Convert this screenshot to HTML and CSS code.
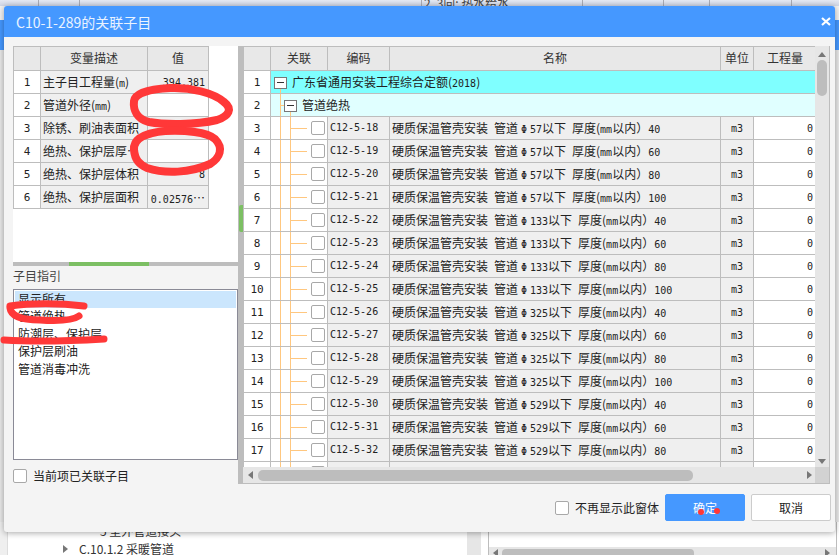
FILE: index.html
```html
<!DOCTYPE html>
<html lang="zh-CN">
<head>
    <meta charset="UTF-8">
    <title>C10-1-289的关联子目</title>
    <link rel="stylesheet" href="styles.css">
</head>
<body>
    <div class="page">
        <div class="page-top">
            <span class="top-cell w39"></span><span class="top-cell w41"></span><span class="top-cell w342"></span>
            <span class="top-cell w161">2. 3向: 热水给水</span><span class="top-cell w81"></span><span class="top-cell w46"></span><span class="top-cell w82"></span>
        </div>
        <div class="page-mid">
            <span class="side-gap"></span>
            <span class="side-blue"></span>
        </div>
        <div class="page-bottom">
            <span class="bottom-side"></span>
            <div class="page-tree">
                <div class="tree-line sub">5 室外管道接头</div>
                <div class="tree-line"><i class="arrow-right"></i>C.10.1.2 采暖管道</div>
            </div>
            <span class="bottom-col"></span>
            <div class="bottom-panel">
                <div class="page-hbar"><i class="arrow-left"></i><span class="page-thumb"></span><i class="arrow-right"></i></div>
            </div>
        </div>
    </div>

    <div class="dialog">
        <div class="dialog-title">
            <span>C10-1-289的关联子目</span>
            <svg class="close" width="10" height="9" viewBox="0 0 10 9"><path d="M1 1L9 8M9 1L1 8" stroke="#fff" stroke-width="2.2" fill="none"/></svg>
        </div>

        <div class="dialog-main">
            <div class="left-col">
                <div class="var-panel">
                    <table class="grid var-table">
                        <colgroup><col class="c-num"><col class="c-desc"><col class="c-val"></colgroup>
                        <thead><tr><th></th><th>变量描述</th><th>值</th></tr></thead>
                        <tbody>
                            <tr><td class="num">1</td><td class="gray"><div class="clip">主子目工程量(<span class="m">m</span>)</div></td><td class="val ro">394.381</td></tr>
                            <tr><td class="num">2</td><td class="gray"><div class="clip">管道外径(<span class="m">mm</span>)</div></td><td class="val"></td></tr>
                            <tr><td class="num">3</td><td class="gray"><div class="clip">除锈、刷油表面积</div></td><td class="val ro"></td></tr>
                            <tr><td class="num">4</td><td class="gray"><div class="clip">绝热、保护层厚度(mm)</div></td><td class="val"></td></tr>
                            <tr><td class="num">5</td><td class="gray"><div class="clip">绝热、保护层体积</div></td><td class="val ro">8</td></tr>
                            <tr><td class="num">6</td><td class="gray"><div class="clip">绝热、保护层面积</div></td><td class="val ro">0.02576<span class="dots">…</span></td></tr>
                        </tbody>
                    </table>
                </div>
                <div class="hsplit"><span class="hsplit-grip"></span></div>
                <div class="guide-label">子目指引</div>
                <ul class="guide-list">
                    <li class="selected">显示所有</li>
                    <li>管道绝热</li>
                    <li>防潮层、保护层</li>
                    <li>保护层刷油</li>
                    <li>管道消毒冲洗</li>
                </ul>
                <label class="check-row"><span class="box"></span>当前项已关联子目</label>
            </div>

            <div class="vsplit"><span class="vsplit-grip"></span></div>

            <div class="right-col">
                <div class="right-top">
                    <div class="rows-clip">
                        <table class="grid item-table">
                            <colgroup><col class="i-num"><col class="i-link"><col class="i-code"><col class="i-name"><col class="i-unit"><col class="i-qty"></colgroup>
                            <thead><tr><th></th><th>关联</th><th>编码</th><th>名称</th><th>单位</th><th>工程量</th></tr></thead>
                            <tbody>
                                <tr class="lv1"><td class="num">1</td><td colspan="5" class="root-cell"><span class="fold"></span>广东省通用安装工程综合定额(<span class="m">2018</span>)</td></tr>
                                <tr class="lv2"><td class="num">2</td><td colspan="5" class="group-cell"><span class="fold"></span>管道绝热</td></tr>
                                <tr><td class="num">3</td><td class="tree"><span class="box"></span></td><td class="code">C12-5-18</td><td class="gray name">硬质保温管壳安装 管道<span class="phi">Φ</span><span class="m">57</span>以下 厚度(<span class="m">mm</span>以内）<span class="m">40</span></td><td class="unit">m3</td><td class="qty">0</td></tr>
                                <tr><td class="num">4</td><td class="tree"><span class="box"></span></td><td class="code">C12-5-19</td><td class="gray name">硬质保温管壳安装 管道<span class="phi">Φ</span><span class="m">57</span>以下 厚度(<span class="m">mm</span>以内）<span class="m">60</span></td><td class="unit">m3</td><td class="qty">0</td></tr>
                                <tr><td class="num">5</td><td class="tree"><span class="box"></span></td><td class="code">C12-5-20</td><td class="gray name">硬质保温管壳安装 管道<span class="phi">Φ</span><span class="m">57</span>以下 厚度(<span class="m">mm</span>以内）<span class="m">80</span></td><td class="unit">m3</td><td class="qty">0</td></tr>
                                <tr><td class="num">6</td><td class="tree"><span class="box"></span></td><td class="code">C12-5-21</td><td class="gray name">硬质保温管壳安装 管道<span class="phi">Φ</span><span class="m">57</span>以下 厚度(<span class="m">mm</span>以内）<span class="m">100</span></td><td class="unit">m3</td><td class="qty">0</td></tr>
                                <tr><td class="num">7</td><td class="tree"><span class="box"></span></td><td class="code">C12-5-22</td><td class="gray name">硬质保温管壳安装 管道<span class="phi">Φ</span><span class="m">133</span>以下 厚度(<span class="m">mm</span>以内）<span class="m">40</span></td><td class="unit">m3</td><td class="qty">0</td></tr>
                                <tr><td class="num">8</td><td class="tree"><span class="box"></span></td><td class="code">C12-5-23</td><td class="gray name">硬质保温管壳安装 管道<span class="phi">Φ</span><span class="m">133</span>以下 厚度(<span class="m">mm</span>以内）<span class="m">60</span></td><td class="unit">m3</td><td class="qty">0</td></tr>
                                <tr><td class="num">9</td><td class="tree"><span class="box"></span></td><td class="code">C12-5-24</td><td class="gray name">硬质保温管壳安装 管道<span class="phi">Φ</span><span class="m">133</span>以下 厚度(<span class="m">mm</span>以内）<span class="m">80</span></td><td class="unit">m3</td><td class="qty">0</td></tr>
                                <tr><td class="num">10</td><td class="tree"><span class="box"></span></td><td class="code">C12-5-25</td><td class="gray name">硬质保温管壳安装 管道<span class="phi">Φ</span><span class="m">133</span>以下 厚度(<span class="m">mm</span>以内）<span class="m">100</span></td><td class="unit">m3</td><td class="qty">0</td></tr>
                                <tr><td class="num">11</td><td class="tree"><span class="box"></span></td><td class="code">C12-5-26</td><td class="gray name">硬质保温管壳安装 管道<span class="phi">Φ</span><span class="m">325</span>以下 厚度(<span class="m">mm</span>以内）<span class="m">40</span></td><td class="unit">m3</td><td class="qty">0</td></tr>
                                <tr><td class="num">12</td><td class="tree"><span class="box"></span></td><td class="code">C12-5-27</td><td class="gray name">硬质保温管壳安装 管道<span class="phi">Φ</span><span class="m">325</span>以下 厚度(<span class="m">mm</span>以内）<span class="m">60</span></td><td class="unit">m3</td><td class="qty">0</td></tr>
                                <tr><td class="num">13</td><td class="tree"><span class="box"></span></td><td class="code">C12-5-28</td><td class="gray name">硬质保温管壳安装 管道<span class="phi">Φ</span><span class="m">325</span>以下 厚度(<span class="m">mm</span>以内）<span class="m">80</span></td><td class="unit">m3</td><td class="qty">0</td></tr>
                                <tr><td class="num">14</td><td class="tree"><span class="box"></span></td><td class="code">C12-5-29</td><td class="gray name">硬质保温管壳安装 管道<span class="phi">Φ</span><span class="m">325</span>以下 厚度(<span class="m">mm</span>以内）<span class="m">100</span></td><td class="unit">m3</td><td class="qty">0</td></tr>
                                <tr><td class="num">15</td><td class="tree"><span class="box"></span></td><td class="code">C12-5-30</td><td class="gray name">硬质保温管壳安装 管道<span class="phi">Φ</span><span class="m">529</span>以下 厚度(<span class="m">mm</span>以内）<span class="m">40</span></td><td class="unit">m3</td><td class="qty">0</td></tr>
                                <tr><td class="num">16</td><td class="tree"><span class="box"></span></td><td class="code">C12-5-31</td><td class="gray name">硬质保温管壳安装 管道<span class="phi">Φ</span><span class="m">529</span>以下 厚度(<span class="m">mm</span>以内）<span class="m">60</span></td><td class="unit">m3</td><td class="qty">0</td></tr>
                                <tr><td class="num">17</td><td class="tree"><span class="box"></span></td><td class="code">C12-5-32</td><td class="gray name">硬质保温管壳安装 管道<span class="phi">Φ</span><span class="m">529</span>以下 厚度(<span class="m">mm</span>以内）<span class="m">80</span></td><td class="unit">m3</td><td class="qty">0</td></tr>
                                <tr><td class="num"></td><td class="tree"><span class="box"></span></td><td class="code"></td><td class="gray name">硬质保温管壳安装 管道<span class="phi">Φ</span><span class="m">529</span>以下 厚度(<span class="m">mm</span>以内）<span class="m">100</span></td><td class="unit"></td><td class="qty"></td></tr>
                            </tbody>
                        </table>
                    </div>
                    <div class="vbar">
                        <i class="arrow-up"></i>
                        <span class="vthumb"></span>
                        <i class="arrow-down"></i>
                    </div>
                </div>
                <div class="hbar">
                    <i class="arrow-left"></i>
                    <span class="hthumb"></span>
                    <i class="arrow-right"></i>
                    <span class="corner"></span>
                </div>
            </div>
        </div>

        <div class="dialog-foot">
            <label class="check-row"><span class="box"></span>不再显示此窗体</label>
            <button class="btn primary">确定</button>
            <button class="btn">取消</button>
        </div>
    </div>

    <!-- 红色手绘标记 -->
    <svg class="marks" width="839" height="555" viewBox="0 0 839 555">
        <g fill="none" stroke="#ff3838" stroke-linecap="round" stroke-linejoin="round">
            <path stroke-width="8" d="M134 101C135 93 150 89 170 88C190 87 214 93 224 102C233 109 229 116 217 120C195 125 165 125 149 122C137 119 133 110 134 101Z"/>
            <path stroke-width="8" d="M134 150C133 139 145 133 165 131C185 130 207 132 215 139C224 148 220 158 210 164C190 173 165 174 147 168C139 164 135 160 134 150Z"/>
            <path stroke-width="7" d="M10 306C30 303 60 303 84 306"/>
            <path stroke-width="7" d="M10 308C11 316 22 320 40 320C55 321 72 321 79 316"/>
            <path stroke-width="7" d="M4 340C35 342 70 341 104 339"/>
        </g>
        <circle cx="701" cy="512" r="3" fill="#ff3838"/>
        <circle cx="717" cy="511" r="3" fill="#ff3838"/>
    </svg>
</body>
</html>
```

FILE: styles.css
```css
* {
    box-sizing: border-box;
}
body {
    margin: 0;
    width: 839px;
    height: 555px;
    overflow: hidden;
    position: relative;
    font-family: "Noto Sans CJK SC", sans-serif;
    font-size: 12px;
    color: #222;
    background-color: #fff;
}
.m {
    font-family: "DejaVu Sans Mono", monospace;
    font-size: 10px;
}
.phi {
    display: inline-block;
    width: 12px;
    text-align: center;
    font-family: "DejaVu Sans Mono", monospace;
    font-size: 10px;
}

/* tela de fundo */
.page {
    height: 555px;
    display: flex;
    flex-direction: column;
}
.page-top {
    height: 6px;
    flex: none;
    display: flex;
    background: linear-gradient(#e4e8f2, #cfd6e6);
    color: #444;
    line-height: 5px;
}
.top-cell {
    height: 6px;
    padding-left: 2px;
    border-right: 1px solid #a8aab4;
    white-space: nowrap;
    overflow: hidden;
}
.w39 { width: 39px; }
.w41 { width: 41px; }
.w342 { width: 342px; }
.w161 { width: 161px; }
.w81 { width: 81px; }
.w46 { width: 46px; }
.w82 { width: 82px; }
.page-mid {
    flex: 1;
    display: flex;
    flex-direction: column;
    background-color: #e8e8e8;
}
.side-gap {
    height: 14px;
    background-color: #f2f2f2;
}
.side-blue {
    height: 30px;
    background-color: #4598ff;
}
.page-bottom {
    height: 33px;
    flex: none;
    display: flex;
    overflow: hidden;
}
.bottom-side {
    width: 8px;
    flex: none;
    background-color: #efefef;
    border-right: 1px solid #ddd;
}
.page-tree {
    width: 459px;
    flex: none;
    color: #333;
    padding-left: 55px;
}
.tree-line {
    height: 18px;
    line-height: 18px;
    white-space: nowrap;
    display: flex;
    align-items: center;
    gap: 11px;
}
.tree-line.sub {
    padding-left: 37px;
}
.bottom-col {
    width: 14px;
    flex: none;
    background-color: #e6e6e6;
}
.bottom-panel {
    width: 349px;
    flex: none;
    margin-left: 7px;
    border-left: 1px solid #bdbdbd;
    border-right: 1px solid #bdbdbd;
    display: flex;
    flex-direction: column;
    justify-content: flex-end;
}
.page-hbar {
    height: 8px;
    display: flex;
    align-items: flex-start;
    padding: 2px 6px 0 4px;
    background-color: #e6e6e6;
}
.page-thumb {
    width: 192px;
    height: 8px;
    margin-left: 4px;
    background-color: #bdbdbd;
    border-radius: 4px 4px 0 0;
}
.page-hbar .arrow-right {
    margin-left: auto;
}
.arrow-up, .arrow-down {
    width: 0;
    height: 0;
    border-left: 4px solid transparent;
    border-right: 4px solid transparent;
}
.arrow-up { border-bottom: 5px solid #777; }
.arrow-down { border-top: 5px solid #777; }
.arrow-left, .arrow-right {
    width: 0;
    height: 0;
    flex: none;
    border-top: 4px solid transparent;
    border-bottom: 4px solid transparent;
}
.arrow-left { border-right: 5px solid #777; }
.arrow-right { border-left: 5px solid #777; }

/* janela */
.dialog {
    position: absolute;
    left: 4px;
    top: 6px;
    width: 831px;
    height: 526px;
    background-color: #f4f4f4;
    border-radius: 3px;
    box-shadow: 0 1px 6px rgba(0, 0, 0, 0.35);
    display: flex;
    flex-direction: column;
}
.dialog-title {
    height: 31px;
    flex: none;
    background-color: #4598ff;
    color: #eaf3ff;
    font-size: 14px;
    padding: 0 4px 0 12px;
    display: flex;
    align-items: center;
    justify-content: space-between;
    border-radius: 3px 3px 0 0;
}
.close {
    display: block;
    margin-top: -1px;
}
.dialog-main {
    display: flex;
    height: 438px;
    margin: 9px 5px 0 9px;
    flex: none;
}
.left-col {
    width: 225px;
    flex: none;
    display: flex;
    flex-direction: column;
}
.var-panel {
    height: 216px;
    flex: none;
    background-color: #fff;
}
.hsplit {
    height: 4px;
    flex: none;
    background-color: #bdbdbd;
    display: flex;
    justify-content: center;
}
.hsplit-grip {
    width: 80px;
    margin-right: 33px;
    background-color: #7cbf63;
}
.guide-label {
    height: 23px;
    flex: none;
    line-height: 19px;
    color: #444;
}
.guide-list {
    margin: 0;
    padding: 1px 1px;
    list-style: none;
    height: 171px;
    flex: none;
    background-color: #fff;
    border: 1px solid #8a8a96;
}
.guide-list li {
    height: 17.4px;
    line-height: 15px;
    padding-left: 3px;
    color: #222;
}
.guide-list .selected {
    background-color: #cbe6fd;
}
.check-row {
    display: flex;
    align-items: center;
    gap: 6px;
    color: #222;
}
.left-col .check-row {
    margin-top: 7px;
}
.box {
    display: block;
    width: 14px;
    height: 14px;
    flex: none;
    background-color: #fff;
    border: 1px solid #a8a8a8;
    border-radius: 2px;
}
.vsplit {
    width: 5px;
    flex: none;
    background-color: #bdbdbd;
    display: flex;
    align-items: flex-start;
}
.vsplit-grip {
    width: 4px;
    height: 27px;
    margin: 159px 0 0 1px;
    background-color: #7cbf63;
    border-radius: 2px 0 0 2px;
}
.right-col {
    flex: 1;
    min-width: 0;
    display: flex;
    flex-direction: column;
    background-color: #fff;
    border-right: 1px solid #bdbdbd;
    border-bottom: 1px solid #bdbdbd;
}
.right-top {
    height: 421px;
    flex: none;
    display: flex;
}
.rows-clip {
    flex: 1;
    min-width: 0;
    overflow: hidden;
}

/* tabelas */
.grid {
    border-collapse: collapse;
    table-layout: fixed;
}
.grid th, .grid td {
    height: 23px;
    padding: 0;
    border: 1px solid #bdbdbd;
    white-space: nowrap;
    overflow: hidden;
}
.grid th {
    height: 24px;
    padding-bottom: 2px;
    background-color: #e8e8e8;
    color: #333;
    font-weight: normal;
    text-align: center;
}
.grid td.num {
    text-align: center;
    font-family: "DejaVu Sans Mono", monospace;
    font-size: 11px;
    background-color: #fff;
}
.grid td.gray {
    background-color: #efefef;
    padding: 0 0 2px 2px;
}
.grid td.name {
    word-spacing: 3.3px;
}
.var-table {
    width: 195px;
}
.c-num { width: 27px; }
.c-desc { width: 107px; }
.c-val { width: 61px; }
.clip {
    overflow: hidden;
    text-overflow: ellipsis;
}
.var-table .val {
    text-align: right;
    padding: 0 3px 0 0;
    font-family: "DejaVu Sans Mono", monospace;
    font-size: 10px;
}
.var-table .ro {
    background-color: #efefef;
}
.dots {
    font-family: "Noto Sans CJK SC", sans-serif;
    font-size: 12px;
}
.item-table {
    width: 573px;
}
.i-num { width: 27px; }
.i-link { width: 57px; }
.i-code { width: 62px; }
.i-name { width: 331px; }
.i-unit { width: 33px; }
.i-qty { width: 63px; }
.lv1 td.root-cell {
    padding: 0 0 2px 3px;
    background-color: #7fffff;
    background-image: linear-gradient(#ffc77f, #ffc77f);
    background-repeat: no-repeat;
    background-size: 1px 6px;
    background-position: 9px 17px;
}
.lv2 td.group-cell {
    padding: 0 0 2px 13px;
    background-color: #e0ffff;
    background-image: linear-gradient(#ffc77f, #ffc77f), linear-gradient(#ffc77f, #ffc77f), linear-gradient(#ffc77f, #ffc77f);
    background-repeat: no-repeat;
    background-size: 1px 23px, 5px 1px, 1px 6px;
    background-position: 9px 0, 9px 11px, 19px 17px;
}
.fold {
    display: inline-block;
    width: 13px;
    height: 12px;
    margin-right: 5px;
    vertical-align: -2px;
    border: 1px solid #777;
    background: linear-gradient(#333, #333) center / 7px 1px no-repeat #fff;
}
.grid td.tree {
    padding-left: 40px;
    background-image: linear-gradient(#ffc77f, #ffc77f), linear-gradient(#ffc77f, #ffc77f), linear-gradient(#ffc77f, #ffc77f);
    background-repeat: no-repeat;
    background-size: 1px 23px, 1px 23px, 17px 1px;
    background-position: 9px 0, 19px 0, 19px 11px;
}
.grid td.code {
    background-color: #efefef;
    padding: 0 0 2px 2px;
    font-family: "DejaVu Sans Mono", monospace;
    font-size: 10px;
}
.grid td.unit {
    background-color: #efefef;
    text-align: center;
    font-family: "DejaVu Sans Mono", monospace;
    font-size: 10px;
}
.grid td.qty {
    text-align: right;
    padding-right: 3px;
    font-family: "DejaVu Sans Mono", monospace;
    font-size: 10px;
}

/* barras de rolagem */
.vbar {
    width: 14px;
    flex: none;
    background-color: #e6e6e6;
    display: flex;
    flex-direction: column;
    align-items: center;
    padding-top: 6px;
}
.vthumb {
    width: 10px;
    height: 36px;
    margin-top: 3px;
    background-color: #bdbdbd;
    border-radius: 5px;
}
.vbar .arrow-down {
    margin-top: auto;
    margin-bottom: 3px;
}
.hbar {
    height: 16px;
    flex: none;
    background-color: #e6e6e6;
    display: flex;
    align-items: center;
    padding-left: 5px;
}
.hthumb {
    width: 435px;
    height: 11px;
    margin-left: 5px;
    background-color: #bdbdbd;
    border-radius: 5px;
}
.hbar .arrow-right {
    margin-left: auto;
}
.corner {
    width: 14px;
    height: 16px;
    margin-left: 3px;
    background-color: #d2d2d2;
}

/* rodape */
.dialog-foot {
    flex: 1;
    display: flex;
    align-items: flex-start;
    justify-content: flex-end;
    padding: 10px 4px 0 0;
    gap: 6px;
}
.dialog-foot .check-row {
    height: 27px;
}
.btn {
    width: 80px;
    height: 27px;
    font-family: inherit;
    font-size: 12px;
    color: #222;
    background-color: #fff;
    border: 1px solid #ccc;
    border-radius: 2px;
}
.btn.primary {
    color: #fff;
    background-color: #4598ff;
    border-color: #4598ff;
}
.marks {
    position: absolute;
    left: 0;
    top: 0;
    pointer-events: none;
}
```
